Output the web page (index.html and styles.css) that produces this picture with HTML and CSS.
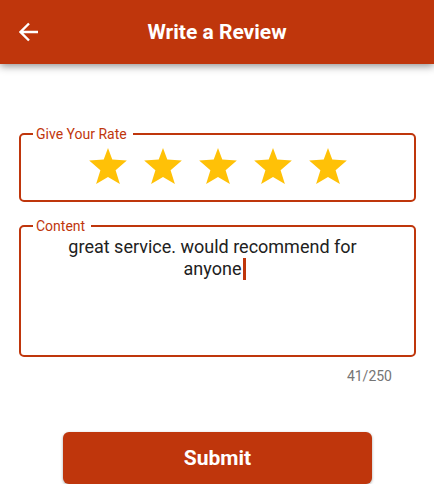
FILE: index.html
```html
<!DOCTYPE html>
<html lang="en">
<head>
<meta charset="utf-8">
<meta name="viewport" content="width=device-width, initial-scale=1">
<title>Write a Review</title>
<link rel="stylesheet" href="styles.css">
</head>
<body>
<svg class="defs" aria-hidden="true">
  <symbol id="star" viewBox="0 0 114 109"><path d="M57 0 70 35 114 38 80 67 93 109 57 88 21 109 34 67 0 38 44 35Z"/></symbol>
</svg>
<header class="bar">
  <button class="back" type="button" aria-label="Back">
    <svg viewBox="0 0 20 20" aria-hidden="true"><path d="M19 10H2M10 1.5 1.5 10l8.500 8.500"/></svg>
  </button>
  <h1 class="title">Write a Review</h1>
</header>
<form class="form">
  <fieldset class="field">
    <legend class="legend">Give Your Rate</legend>
    <div class="stars">
      <label class="star"><input type="radio" name="rate" value="1" aria-label="1 star"><svg aria-hidden="true"><use href="#star"/></svg></label>
      <label class="star"><input type="radio" name="rate" value="2" aria-label="2 stars"><svg aria-hidden="true"><use href="#star"/></svg></label>
      <label class="star"><input type="radio" name="rate" value="3" aria-label="3 stars"><svg aria-hidden="true"><use href="#star"/></svg></label>
      <label class="star"><input type="radio" name="rate" value="4" aria-label="4 stars"><svg aria-hidden="true"><use href="#star"/></svg></label>
      <label class="star"><input type="radio" name="rate" value="5" aria-label="5 stars" checked><svg aria-hidden="true"><use href="#star"/></svg></label>
    </div>
  </fieldset>
  <fieldset class="field">
    <legend class="legend"><label for="content">Content</label></legend>
    <div class="editor">
      <textarea id="content" class="text" maxlength="250" rows="5" spellcheck="false">great service. would recommend for anyone</textarea>
      <span class="caret"></span>
    </div>
  </fieldset>
  <p class="count">41/250</p>
  <button class="submit" type="submit">Submit</button>
</form>
</body>
</html>
```
FILE: styles.css
```css
:root {
  --brand: #bf360c;
}

* {
  box-sizing: border-box;
}

body {
  margin: 0;
  background: #fff;
  color: #212121;
  font-family: Roboto, "Liberation Sans", sans-serif;
}

.defs {
  display: none;
}

.bar {
  display: grid;
  grid-template-columns: 58px 1fr 58px;
  align-items: center;
  height: 64px;
  background: var(--brand);
  color: #fff;
  box-shadow: 0 2px 8px rgba(0, 0, 0, 0.45);
}

.back {
  display: flex;
  align-items: center;
  justify-content: center;
  height: 48px;
  padding: 0;
  border: 0;
  background: none;
  color: inherit;
}

.back svg {
  width: 20px;
  height: 20px;
  fill: none;
  stroke: currentColor;
  stroke-width: 2.4;
}

.title {
  margin: 0;
  text-align: center;
  font-size: 21px;
  font-weight: 700;
  line-height: 24px;
}

.form {
  display: flex;
  flex-direction: column;
  padding: 62px 18px 0 19px;
}

.field {
  min-width: 0;
  margin: 0 0 16px;
  padding: 0 12px;
  border: 2px solid var(--brand);
  border-radius: 5px;
}

.legend {
  padding: 0 6px 0 3px;
  color: var(--brand);
  font-size: 14px;
  line-height: 16px;
}

.stars {
  display: flex;
  justify-content: center;
  gap: 17px;
  padding: 6px 0 16px;
}

.star {
  display: flex;
}

.star input {
  position: absolute;
  opacity: 0;
  margin: 0;
}

.star svg {
  width: 38px;
  height: 36px;
  fill: #ffc107;
}

.editor {
  position: relative;
}

.text {
  display: block;
  width: 100%;
  height: 121px;
  padding: 2px 34px 2px 24px;
  border: 0;
  outline: 0;
  resize: none;
  overflow: hidden;
  background: none;
  color: inherit;
  text-align: center;
  font: 18px/22px Roboto, "Liberation Sans", sans-serif;
  caret-color: var(--brand);
}

.caret {
  position: absolute;
  top: 24px;
  left: calc(50% + 25px);
  width: 3px;
  height: 22px;
  background: var(--brand);
}

.count {
  margin: -5px 24px 0;
  text-align: right;
  color: #757575;
  font-size: 14px;
  line-height: 16px;
}

.submit {
  align-self: center;
  width: 78%;
  height: 52px;
  margin-top: 48px;
  border: 0;
  border-radius: 6px;
  background: var(--brand);
  color: #fff;
  font: 700 21px/24px Roboto, "Liberation Sans", sans-serif;
  box-shadow: 0 1px 3px rgba(0, 0, 0, 0.35);
}
```
